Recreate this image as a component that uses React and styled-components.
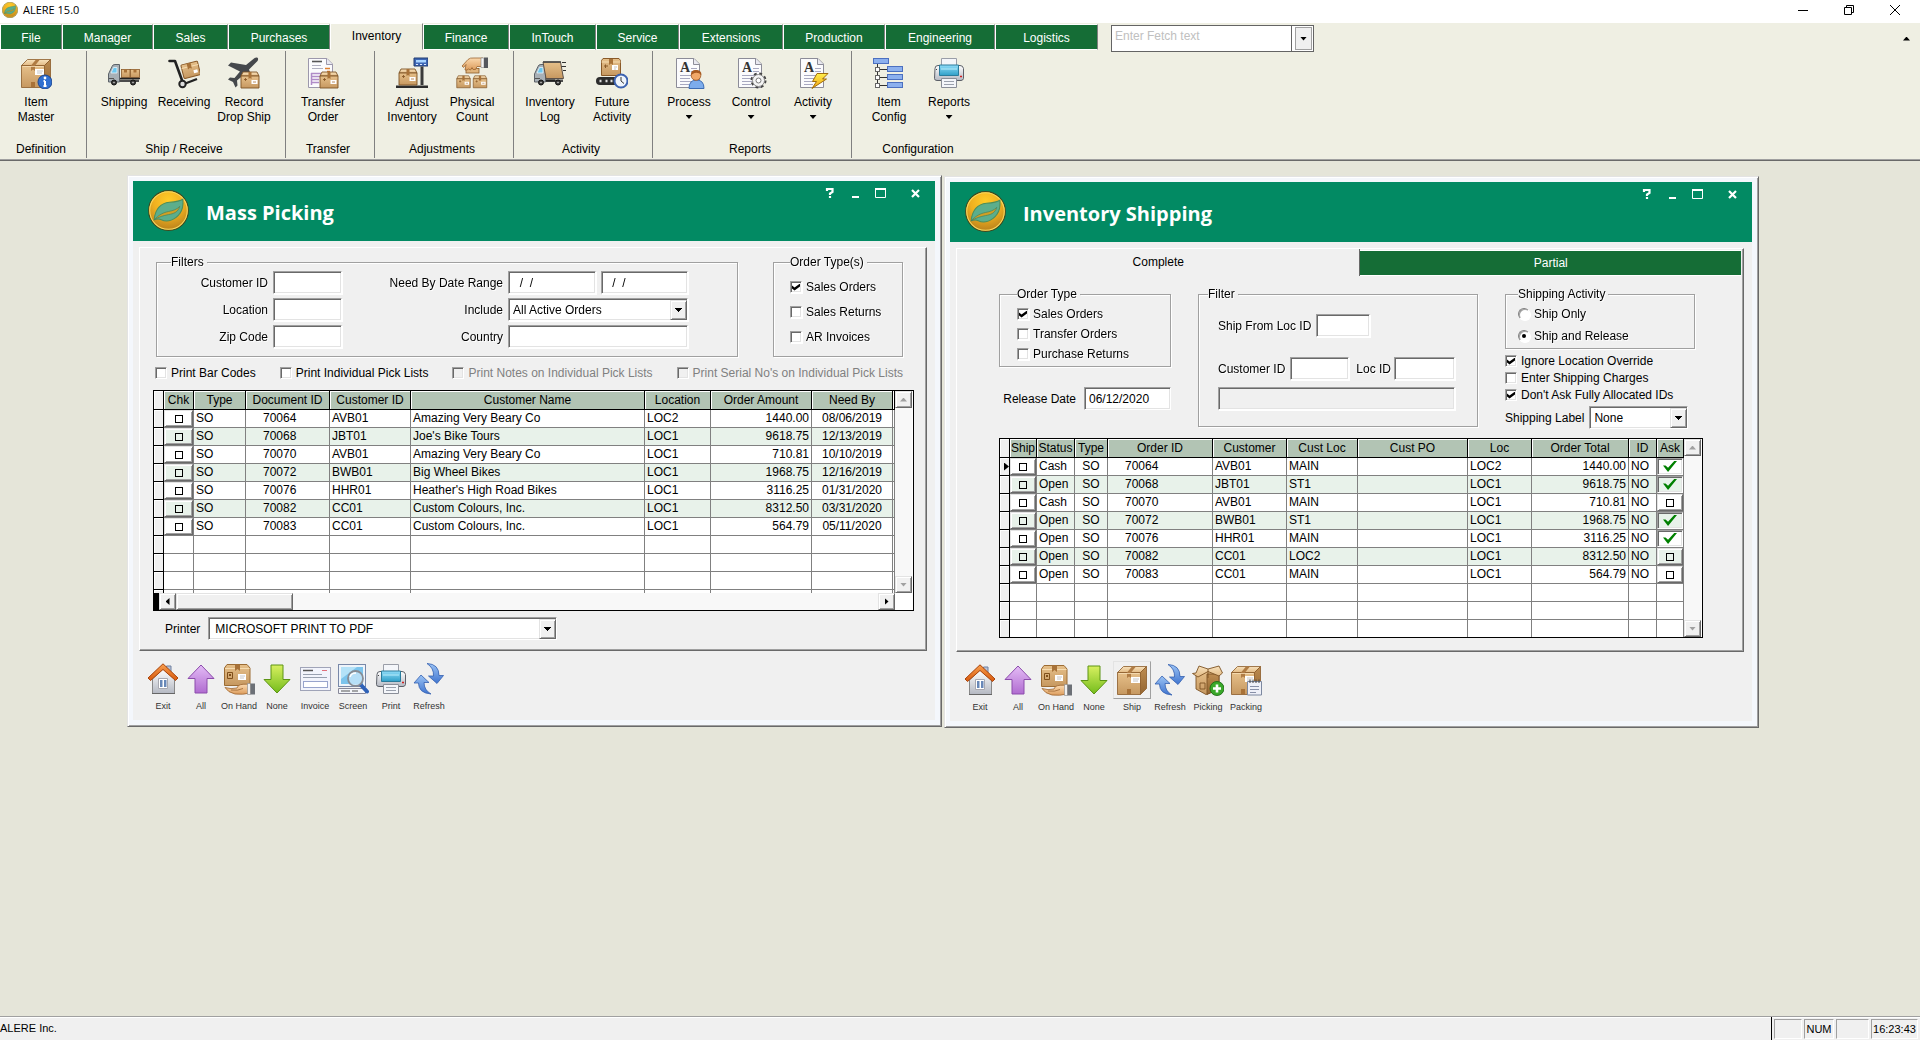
import React from "react";
import styled, {createGlobalStyle, css} from "styled-components";

const GlobalStyle = createGlobalStyle`
  *, *::before, *::after { box-sizing: border-box; }
  body {
    margin: 0;
    background: #e5e5d9;
    font-family: "Liberation Sans", Arial, sans-serif;
    font-size: 12px;
    color: #000;
  }
  button, input, select {
    font: inherit;
    color: inherit;
    margin: 0;
    padding: 0;
    border: 0;
    border-radius: 0;
    background: none;
    outline: none;
  }
`;

const sunken = css`
  border: 1px solid;
  border-color: #a0a0a0 #fff #fff #a0a0a0;
  box-shadow: inset 1px 1px #696969, inset -1px -1px #e3e3e3;
`;

const raised = css`
  border: 1px solid;
  border-color: #e3e3e3 #696969 #696969 #e3e3e3;
  box-shadow: inset 1px 1px #fff, inset -1px -1px #a0a0a0;
`;

/* ---------- icons ---------- */

const Svg = styled.svg`
  display: block;
  flex: none;
  width: ${({$size = 32}) => $size}px;
  height: ${({$size = 32}) => $size}px;
`;

const HiddenSvg = styled.svg`
  position: absolute;
  width: 0;
  height: 0;
`;

const Gradient = ({id, from, to}) => (
  <linearGradient id={id} x1="0" y1="0" x2="0" y2="1">
    <stop offset="0" stopColor={from} />
    <stop offset="1" stopColor={to} />
  </linearGradient>
);

const Gradients = () => (
  <HiddenSvg aria-hidden="true">
    <defs>
      <Gradient id="card" from="#e6c08a" to="#c69860" />
      <Gradient id="cardTop" from="#f8e2bc" to="#e2ba84" />
      <Gradient id="cardSide" from="#bd8c50" to="#946632" />
      <Gradient id="blue" from="#9cc4f5" to="#3f74cf" />
      <Gradient id="screen" from="#8fdcf8" to="#2f9fc8" />
      <Gradient id="steel" from="#ffffff" to="#b4b8c2" />
      <Gradient id="skin" from="#fbd9ae" to="#dc9c5c" />
      <Gradient id="purple" from="#e4bcf6" to="#b06cd0" />
      <Gradient id="lime" from="#d8f060" to="#74bc1c" />
      <Gradient id="bolt" from="#fff04c" to="#f0a010" />
      <Gradient id="roof" from="#f8a050" to="#d8590c" />
      <radialGradient id="coin" cx="0.5" cy="0.25" r="0.75">
        <stop offset="0" stopColor="#ffcc28" />
        <stop offset="0.5" stopColor="#f0b020" />
        <stop offset="1" stopColor="#b8801c" />
      </radialGradient>
    </defs>
  </HiddenSvg>
);

const Logo = ({size}) => (
  <Svg $size={size} viewBox="0 0 40 40">
    <circle cx="20" cy="20" r="19.4" fill="url(#coin)" stroke="#3c4a20" strokeWidth="1" />
    <circle cx="20" cy="20" r="18.3" fill="none" stroke="#f8d860" strokeWidth="1" />
    <path d="M6 29c1-10 6-16 15-17 6-.5 10-1 13-3 .5 5 0 10-3 14-4 6-12 9-18 6-2-1-4-1-7 0z" fill="#5cae8c" stroke="#4b8e5c" />
    <path d="M6 29c5-5 9-7 14-8 5-1 8-2 11-5-2 6-6 7-11 8-5 1-9 2-14 5z" fill="#d2a024" stroke="#3f7c58" strokeWidth="0.6" />
  </Svg>
);

// large box seen from the left front corner
const BigBox = () => (
  <g stroke="#8a5a28" strokeWidth="0.8" strokeLinejoin="round">
    <path d="M1.500 8.500 7.500 2.500H30.500L24.500 8.500z" fill="url(#cardTop)" />
    <path d="M24.500 8.500 30.500 2.500V24.500L24.500 30.500z" fill="url(#cardSide)" />
    <path d="M1.500 8.500H24.500V30.500H1.500z" fill="url(#card)" />
    <path d="M11 8.500 16 2.500H20L15 8.500V14L13 12.500 11 14z" fill="#b07c44" stroke="none" />
    <path d="M11 25H15V30H11z" fill="#a87238" stroke="none" />
    <path d="M2.500 9.500H23.500" stroke="#f8e0b8" />
  </g>
);

const Label = ({x, y, w = 8, h = 6}) => (
  <g>
    <rect x={x} y={y} width={w} height={h} fill="#fff" />
    <path d={`M${x + 2} ${y + 2}h${w - 3}M${x + 2} ${y + 4}h${w - 4}`} stroke="#b8b8b8" strokeWidth="0.8" />
  </g>
);

// front-facing box, drawn on a 20 x 17 area
const SmallBox = ({x, y, scale = 1}) => (
  <g transform={`translate(${x} ${y}) scale(${scale})`} stroke="#7d5224" strokeWidth="0.9" strokeLinejoin="round">
    <path d="M1 5 3 1H17L19 5z" fill="url(#cardTop)" />
    <rect x="1" y="5" width="18" height="12" fill="url(#card)" />
    <path d="M8.500 1H11.500V8L10 7 8.500 8z" fill="#a87238" stroke="none" />
    <path d="M4 8.500h3M5.500 7v3" fill="none" stroke="#8a5a28" />
    <rect x="11.500" y="9" width="6" height="4" fill="#fff" stroke="none" />
    <path d="M13 11h3" stroke="#b08050" />
  </g>
);

const Sheet = ({letter}) => (
  <g>
    <path d="M3.500 1.500H21L26.500 7V30.500H3.500z" fill="#fbfbfd" stroke="#8c8c98" />
    <path d="M20.500 1.500V7.500H26.500" fill="#e8e8f0" stroke="#8c8c98" />
    {letter && (
      <g>
        <text x="7" y="14.500" fontFamily="Liberation Serif, serif" fontWeight="bold" fontSize="14" fill="#333">A</text>
        <path d="M18 11.500h6M18 14.500h6M7 18.500h14M7 21.500h10M7 24.500h12M7 27.500h9" stroke="#a8a8c0" />
      </g>
    )}
  </g>
);

const Printer = () => (
  <g strokeLinejoin="round">
    <path d="M8.500 1.500H23.500V12H8.500z" fill="#f4f6fa" stroke="#9a9ea8" />
    <path d="M2 11.500Q2 8.500 5 8.500H27Q30 8.500 30.500 11.500V21.500Q30 23.500 28 23.500H4Q1.500 23.500 1.500 21.500z" fill="url(#steel)" stroke="#5c6068" />
    <path d="M6.500 8H25.500V18.500H6.500z" fill="url(#screen)" stroke="#2a7c9c" />
    <path d="M8 12H24" stroke="#b8ecfb" />
    <path d="M8.500 21.500H23.500V30.500H8.500z" fill="#f4f6fa" stroke="#8a8e98" />
    <path d="M11 24.500H21M11 27.500H21" stroke="#9aa0ac" />
    <path d="M27 19.500h2" stroke="#d02020" strokeWidth="1.500" />
    <path d="M3 12.500h1" stroke="#444" />
  </g>
);

const Wheels = ({a, b, y}) => (
  <g fill="#3c3c3c" stroke="#111">
    <circle cx={a} cy={y} r="2.500" />
    <circle cx={b} cy={y} r="2.500" />
    <circle cx={a} cy={y} r="0.800" fill="#ccc" stroke="none" />
    <circle cx={b} cy={y} r="0.800" fill="#ccc" stroke="none" />
  </g>
);

const Cab = () => (
  <g>
    <path d="M.5 25V17L4 9.500Q4.500 7.500 7 7.500H11.500V25z" fill="#a8b0b6" stroke="#5c6268" />
    <path d="M3 16 5.500 10.500H9V16z" fill="#6cc8f0" stroke="#e8f4fa" strokeWidth="0.800" />
    <path d="M1 21.500h5" stroke="#555" />
  </g>
);

const Hand = () => (
  <g>
    <path d="M2 24.500Q8 26.500 14 25L15.500 22.500Q19 20.500 27 21.500V30Q20 32 12 31 5 29.500 2 24.500z" fill="url(#skin)" stroke="#9c6430" strokeWidth="0.8" />
    <path d="M8 27Q15 28 20 25.500" fill="none" stroke="#9c6430" strokeWidth="0.8" />
    <path d="M24.500 20.500H27.500V31.500H24.500z" fill="#f0f0f0" stroke="#888" strokeWidth="0.600" />
    <path d="M27.500 20.500H32V31.500H27.500z" fill="#6c7076" />
  </g>
);

const icons = {
  item: (
    <g>
      <BigBox />
      <Label x={15} y={12} w={9} />
      <circle cx="25" cy="25" r="7" fill="#2f6fd0" stroke="#1c4690" />
      <path d="M25 24v5M23.500 24H25M23.500 29H26.500" stroke="#fff" strokeWidth="2" fill="none" />
      <circle cx="25" cy="21" r="1.400" fill="#fff" />
    </g>
  ),
  truck: (
    <g>
      <path d="M2 22.500H31V25H2z" fill="#4c4c4c" />
      <Cab />
      <g fill="url(#card)" stroke="#8a5a28" strokeWidth="0.800">
        <rect x="13.500" y="12.500" width="8.500" height="8" />
        <rect x="22.500" y="12.500" width="9" height="8" />
      </g>
      <path d="M16 12.500h3v3h-3zM25.500 12.500h3v3h-3z" fill="#a87238" />
      <path d="M12 21.500H32" stroke="#222" strokeWidth="1.500" />
      <Wheels a={6} b={25} y={25.500} />
    </g>
  ),
  dolly: (
    <g>
      <g transform="rotate(-14 22 12)">
        <rect x="14" y="6" width="17" height="14" rx="1" fill="url(#card)" stroke="#8a5a28" />
        <path d="M14 9.500H31" stroke="#f6dcb0" />
        <path d="M20 6h4v6l-2-1-2 1z" fill="#a87238" />
        <rect x="25" y="14" width="4" height="3" fill="#fff" />
      </g>
      <path d="M1.500 4H7L15 26" fill="none" stroke="#222" strokeWidth="2.600" strokeLinecap="round" strokeLinejoin="round" />
      <path d="M16 27 29 22" stroke="#222" strokeWidth="2.400" />
      <circle cx="14.500" cy="27" r="3.200" fill="#ddd" stroke="#222" strokeWidth="2" />
    </g>
  ),
  plane: (
    <g>
      <path d="M29 .5Q31 1 29.500 4L21 12.500 26 26 23 28 15.500 18 9 23.500 9.500 28.500 7.500 30.500 5 25 0 22.500 2 20.500 6.500 21 12 14.500 0 8.500 3 5.500 18 8 26 1.500Q28 0 29 .5z" fill="#45484c" />
      <SmallBox x={12} y={14} />
    </g>
  ),
  transfer: (
    <g>
      <path d="M1.500 1.500H20L25.500 7V30.500H1.500z" fill="#fbfbfd" stroke="#9c98ac" />
      <path d="M19.500 1.500V7.500H25.500" fill="#e8e8f0" stroke="#9c98ac" />
      <path d="M5 4.500h10" stroke="#555" strokeWidth="1.600" />
      <path d="M5 8.500h9M5 11.500h11" stroke="#b0b0c0" />
      <path d="M18 11.500h5M20 14.500h3" stroke="#e08030" strokeWidth="1.500" />
      <path d="M4 16.500H14M4 19.500H14M4 22.500H12M4 25.500H12M4.500 16V28" stroke="#b08cc8" strokeWidth="1.500" />
      <SmallBox x={12} y={14} />
    </g>
  ),
  scale: (
    <g>
      <path d="M18 1H32V9H18z" fill="#3c66b4" stroke="#223c70" />
      <path d="M20 3H30V5.500H20z" fill="#a8d4ff" />
      <path d="M20 7.500h2M24 7.500h2M28 7.500h2" stroke="#dde8ff" />
      <path d="M26 9.500V28" stroke="#3a3a3a" strokeWidth="3" />
      <path d="M0 28.500H32V31H0z" fill="#2c2c2c" />
      <SmallBox x={2} y={11} />
    </g>
  ),
  count: (
    <g>
      <rect x="10" y="11.500" width="13" height="4.500" fill="#e0b47c" stroke="#8a5a28" strokeWidth="0.800" />
      <path d="M6 9 12 2.500Q14 .5 18 1H27V9.500H21L19.500 12.500H17L16 10.500 14.500 13 12.500 12 11 13H9L10 7.500 7.500 10.500z" fill="url(#skin)" stroke="#9c6430" strokeWidth="0.800" />
      <path d="M25 1H28V10.500H25z" fill="#f4f4f4" stroke="#888" strokeWidth="0.600" />
      <path d="M28 .5H32V11H28z" fill="#55585e" />
      <SmallBox x={0} y={18} scale={0.75} />
      <SmallBox x={16.500} y={18} scale={0.75} />
    </g>
  ),
  fastTruck: (
    <g>
      <path d="M8 22.500H29V25H8z" fill="#4c4c4c" />
      <Cab />
      <path d="M9 5H26.500L29.500 21.500H12z" fill="url(#card)" stroke="#5c5048" />
      <path d="M9 5H27" stroke="#444" strokeWidth="1.500" />
      <path d="M28 5.500h4M27.500 9.500h4.500M29 13.500h3" stroke="#333" />
      <Wheels a={7} b={24} y={25.500} />
      <path d="M12 23.500h9" stroke="#222" strokeWidth="2" />
    </g>
  ),
  conveyor: (
    <g>
      <path d="M5.500 3.500 7 1.500H23L24.500 3.500V18.500H5.500z" fill="url(#card)" stroke="#8a5a28" />
      <path d="M5.500 5H24.500" stroke="#f6dcb0" />
      <path d="M13 2h4v6l-2-1.500-2 1.500z" fill="#a87238" />
      <path d="M9.500 7.500V11M8 9h4" stroke="#8a5a28" />
      <Label x={16} y={8} w={6} h={5} />
      <rect x="0" y="20" width="24" height="8" rx="4" fill="#2c2c2c" />
      <path d="M3.500 24h2M9.500 24h2M14.500 24h2" stroke="#ddd" strokeWidth="2.500" />
      <circle cx="25" cy="24" r="6.500" fill="#eef4fc" stroke="#3c62b0" strokeWidth="2" />
      <path d="M25 20V24L28 26.500" fill="none" stroke="#333" />
    </g>
  ),
  process: (
    <g>
      <Sheet letter />
      <path d="M16 31.500Q16 23 23.500 23T31 31.500z" fill="#7cacec" stroke="#3c6cb4" />
      <circle cx="23" cy="18.500" r="4.800" fill="#f2a868" stroke="#9c5420" strokeWidth="0.800" />
      <path d="M18 18Q17.500 13 23 13T28.500 18Q25.500 15 21.500 16z" fill="#a85a20" />
    </g>
  ),
  control: (
    <g>
      <Sheet letter />
      <circle cx="23.500" cy="23.500" r="6.500" fill="#f0f0f0" stroke="#444" strokeWidth="3" strokeDasharray="2.600 2.500" />
      <circle cx="23.500" cy="23.500" r="6" fill="#f4f4f4" stroke="#888" />
      <circle cx="23.500" cy="23.500" r="2.500" fill="#fff" stroke="#777" />
    </g>
  ),
  activity: (
    <g>
      <Sheet letter />
      <path d="M20 16.500H31L25.500 22H29.500L15 31.500 19.500 24.500H15.500z" fill="url(#bolt)" stroke="#a06c0c" strokeLinejoin="round" />
    </g>
  ),
  tree: (
    <g>
      <path d="M4.500 7V28M5 12.500H15M5 20.500H15M5 28.500H15" stroke="#333" fill="none" />
      <g fill="#8cb0ee" stroke="#4c70c0">
        <rect x=".5" y="1.500" width="15" height="5" />
        <rect x="14.500" y="9.500" width="15" height="5" />
        <rect x="14.500" y="17.500" width="15" height="5" />
        <rect x="14.500" y="25.500" width="15" height="5" />
      </g>
      <g fill="#fff" stroke="#666">
        <rect x="2.500" y="10.500" width="4" height="4" />
        <rect x="2.500" y="18.500" width="4" height="4" />
        <rect x="2.500" y="26.500" width="4" height="4" />
      </g>
    </g>
  ),
  printer: <Printer />,
  exit: (
    <g>
      <path d="M19.500 3H24V11H19.500z" fill="#b8c4d8" stroke="#7080a0" />
      <path d="M5.500 30.500V16L16 6 27.500 16V30.500z" fill="url(#steel)" stroke="#888" />
      <path d="M5 30.500H28" stroke="#666" />
      <path d="M11.500 15.500H20.500V25.500H11.500z" fill="#fff" stroke="#a8a8b0" />
      <path d="M13 17H15.500V24H13zM17 17H19.500V24H17z" fill="#6888b8" />
      <path d="M16 .8 31 15 28.500 17.500 16 6.500 3.500 17.500 1 15z" fill="url(#roof)" stroke="#a8440c" strokeLinejoin="round" />
    </g>
  ),
  up: <path d="M16 2 29 15.500H22V30H10V15.500H3z" fill="url(#purple)" stroke="#8c4cac" strokeLinejoin="round" />,
  down: <path d="M16 30 29 16.500H22V2H10V16.500H3z" fill="url(#lime)" stroke="#5c9414" strokeLinejoin="round" />,
  onHand: (
    <g>
      <path d="M1.500 5 4 1.500H24L27 5V22.500H1.500z" fill="url(#card)" stroke="#9c6c34" />
      <path d="M2 5.500H26.500" stroke="#f6dcb0" />
      <path d="M12 1.500h5V8l-2.500-2L12 8z" fill="#a87238" />
      <path d="M4.500 9.500H9.500V15.500H4.500z" fill="none" stroke="#80501c" />
      <path d="M6 11h2v2H6z" fill="#80501c" />
      <Label x={15} y={11} />
      <Hand />
    </g>
  ),
  invoice: (
    <g>
      <rect x="1.500" y="4.500" width="30" height="23" fill="#f2f4fc" stroke="#a0a4b8" />
      <path d="M4 7.500h10" stroke="#555" strokeWidth="1.500" />
      <path d="M23 7.500h5" stroke="#e0707c" />
      <path d="M4 11.500h19M4 14.500h24" stroke="#98a0b0" />
      <rect x="4.500" y="18.500" width="24" height="6" fill="#fff" stroke="#98a4cc" />
    </g>
  ),
  screen: (
    <g>
      <rect x="1.500" y="1.500" width="27" height="22" fill="#eef4fa" stroke="#7888a8" />
      <rect x="4" y="4" width="22" height="17" fill="#7cc4ec" />
      <path d="M4 4H20L4 16z" fill="#b4e2f8" />
      <path d="M1.500 25.500H28.500V30.500H1.500z" fill="#f4f6fa" stroke="#889" />
      <path d="M4 28h9M15 28h6" stroke="#555" />
      <path d="M24 22 30 28.500" stroke="#2f62b8" strokeWidth="4" strokeLinecap="round" />
      <circle cx="18.500" cy="15.500" r="7.500" fill="#c4e6fa" fillOpacity="0.800" stroke="#888c94" strokeWidth="1.800" />
      <path d="M13 14Q14 10 19 10" fill="none" stroke="#fff" strokeWidth="1.500" />
    </g>
  ),
  refresh: (
    <g fill="url(#blue)" stroke="#3460b0" strokeWidth="0.8" strokeLinejoin="round">
      <path d="M14 .5Q26 1 26 12.500H30.500L24 20.500 15.500 13H20.500Q21 5 14 .5z" />
      <path d="M18 31Q5.500 30 5.500 20H1L8 12 16 19.500H11Q11 27 18 31z" />
    </g>
  ),
  ship: (
    <g>
      <BigBox />
      <Label x={15} y={13} w={9} />
    </g>
  ),
  picking: (
    <g stroke="#7d5224" strokeWidth="0.900" strokeLinejoin="round">
      <path d="M4 10V25L14 30.500 27 25V10L16 6z" fill="url(#card)" />
      <path d="M15 10V30.500L27 25V10z" fill="url(#cardSide)" />
      <path d="M4 9 7 2 16 5 27 2 30.500 9 27 12 16 7.500 6 13 .5 9.500z" fill="url(#cardTop)" />
      <path d="M16 5V14" />
      <path d="M8 19h5v6H8z" fill="none" />
      <circle cx="25" cy="24.500" r="7" fill="#3aa82a" stroke="#1c6c14" />
      <path d="M25 20.500V28.500M21 24.500H29" stroke="#fff" strokeWidth="2.600" />
    </g>
  ),
  packing: (
    <g>
      <BigBox />
      <Label x={15} y={12} w={9} />
      <path d="M17.500 17.500H31.500V31H17.500z" fill="#eef0f8" stroke="#7c88a0" />
      <path d="M20 15.500V19M23 15.500V19M26 15.500V19M29 15.500V19" stroke="#444" />
      <path d="M20 22.500H29M20 25.500H29M20 28.500H26" stroke="#8890a8" />
    </g>
  ),
};

const Icon = ({name}) => (
  <Svg viewBox="0 0 32 32" aria-hidden="true">
    {icons[name]}
  </Svg>
);

/* ---------- application frame ---------- */

const Shell = styled.div`
  min-height: 100vh;
  display: flex;
  flex-direction: column;
`;

const TitleBar = styled.header`
  display: flex;
  align-items: center;
  height: 23px;
  padding: 0 20px 4px 2px;
  background: #fff;
`;

const AppTitle = styled.span`
  flex: 1;
  margin-left: 5px;
  font-family: "Open Sans", sans-serif;
  font-size: 11px;
  line-height: 18px;
`;

const TitleButton = styled.button`
  display: flex;
  width: 10px;
  margin-left: 36px;
`;

const TabBar = styled.nav`
  position: relative;
  z-index: 1;
  display: flex;
  align-items: flex-end;
  height: 27px;
  background: #efefe3;
`;

const Tab = styled.button`
  width: ${({$width}) => $width}px;
  height: ${({$active}) => ($active ? 27 : 26)}px;
  padding: ${({$active}) => ($active ? "0 0 2px" : "1px 0 0")};
  color: ${({$active}) => ($active ? "#000" : "#fff")};
  background: ${({$active}) => ($active ? "#efefe3" : "#156d36")};
  border: 1px solid;
  border-color: #fff #808080 ${({$active}) => ($active ? "#efefe3" : "#fff")} #fff;
`;

const Fetch = styled.div`
  align-self: flex-start;
  display: flex;
  width: 203px;
  height: 27px;
  margin: 2px 0 0 13px;
  background: #fff;
  border: 1px solid #646464;
`;

const FetchInput = styled.input`
  flex: 1;
  min-width: 0;
  padding: 0 3px 5px;
  border-right: 1px solid #646464;
  &::placeholder {
    color: #c0c0c0;
    opacity: 1;
  }
`;

const FetchButton = styled.button`
  display: flex;
  align-items: center;
  justify-content: center;
  width: 17px;
  margin: 1px 1px 1px 3px;
  background: #f0f0f0;
  border: 1px solid #a0a0a0;
`;

const Arrow = styled.span`
  display: block;
  width: ${({$dir}) => ($dir === "left" || $dir === "right" ? 4 : 7)}px;
  height: ${({$dir}) => ($dir === "left" || $dir === "right" ? 7 : 4)}px;
  background: ${({$color = "#000"}) => $color};
  clip-path: ${({$dir = "down"}) =>
    ({
      down: "polygon(0 0, 100% 0, 50% 100%)",
      up: "polygon(0 100%, 100% 100%, 50% 0)",
      left: "polygon(100% 0, 100% 100%, 0 50%)",
      right: "polygon(0 0, 0 100%, 100% 50%)",
    })[$dir]};
`;

const CollapseButton = styled.button`
  align-self: center;
  margin: 4px 10px 0 auto;
`;

const Ribbon = styled.div`
  display: flex;
  height: 111px;
  padding: 1px 0 2px;
  background: #efefe3;
  border-bottom: 1px solid #696969;
  box-shadow: inset 0 -1px #a0a0a0;
`;

const RibbonGroup = styled.section`
  display: flex;
  flex-direction: column;
  justify-content: space-between;
  width: ${({$width}) => $width}px;
  padding: 6px 0 1px;
  border-right: ${({$last}) => ($last ? "none" : "1px solid #808080")};
`;

const RibbonItems = styled.div`
  display: flex;
  gap: ${({$gap = 0}) => $gap}px;
  padding-left: ${({$pad = 7}) => $pad}px;
`;

const RibbonButton = styled.button`
  display: flex;
  flex-direction: column;
  align-items: center;
  width: 60px;
  line-height: 15px;
  white-space: pre;
`;

const RibbonText = styled.span`
  margin-top: 6px;
`;

const RibbonCaption = styled.div`
  padding-right: 4px;
  line-height: 15px;
  text-align: center;
`;

const DownArrow = styled(Arrow)`
  margin-top: 5px;
`;

const Desktop = styled.main`
  position: relative;
  flex: 1;
  min-height: 580px;
  overflow: hidden;
`;

const StatusBar = styled.footer`
  display: flex;
  align-items: stretch;
  height: 24px;
  background: #f0f0f0;
  border-top: 1px solid #a0a0a0;
  box-shadow: inset 0 1px #fff;
  font-size: 11px;
  line-height: 22px;
`;

const StatusText = styled.span`
  flex: 1;
  border-right: 1px solid #000;
  margin-right: 2px;
`;

const StatusCell = styled.span`
  width: ${({$width}) => $width}px;
  margin: 2px 2px 1px 0;
  line-height: 18px;
  text-align: center;
  border: 1px solid;
  border-color: #a0a0a0 #fff #fff #a0a0a0;
`;

/* ---------- MDI windows ---------- */

const WindowFrame = styled.section`
  position: absolute;
  left: ${({$left}) => $left}px;
  top: ${({$top}) => $top}px;
  width: 815px;
  padding: 5px 6px 6px 5px;
  background: #f4f7fc;
  ${raised}
`;

const WindowHeader = styled.header`
  display: flex;
  align-items: center;
  height: 60px;
  padding: 0 15px 2px;
  background: #028a63;
`;

const WindowTitle = styled.h1`
  flex: 1;
  margin: 0;
  padding: 6px 0 0 17px;
  color: #fff;
  font: bold 20px/28px "Open Sans", "Noto Sans", sans-serif;
`;

const WindowButtons = styled.div`
  align-self: flex-start;
  display: flex;
  align-items: center;
  gap: 14px;
  padding-top: 6px;
`;

const WindowButton = styled.button`
  display: flex;
  margin-left: ${({$far}) => ($far ? 11 : 0)}px;
`;

const WindowBody = styled.div`
  padding: 6px 8px 6px 6px;
  background: #f0f0f0;
`;

const Page = styled.div`
  padding-bottom: ${({$bottom}) => $bottom}px;
  border: 1px solid;
  border-color: #fff #696969 #696969 #fff;
  box-shadow: inset -1px -1px #a0a0a0;
`;

const Toolbar = styled.div`
  display: flex;
  padding: 9px 0 0 5px;
`;

const ToolButton = styled.button`
  width: 38px;
  font-size: 9px;
  line-height: 16px;
  color: #333;
  white-space: nowrap;
`;

const ToolIcon = styled.span`
  display: flex;
  align-items: center;
  justify-content: center;
  height: 38px;
  border: 1px solid;
  border-color: ${({$framed}) => ($framed ? "#e3e3e3 #a0a0a0 #a0a0a0 #e3e3e3" : "transparent")};
`;

/* ---------- form parts ---------- */

const Group = styled.fieldset`
  min-width: 0;
  margin: 0;
  padding: ${({$pad}) => $pad};
  border: 1px solid #a0a0a0;
  filter: drop-shadow(1px 1px 0 #fff);
`;

const Legend = styled.legend`
  padding: 0 3px 0 0;
  line-height: 14px;
`;

const Stack = styled.div`
  display: flex;
  flex-direction: column;
  gap: ${({$gap}) => $gap}px;
`;

const CheckLabel = styled.label`
  display: flex;
  align-items: center;
  gap: 4px;
  line-height: 14px;
  white-space: nowrap;
  color: ${({$disabled}) => ($disabled ? "#808080" : "#000")};
`;

const CheckInput = styled.input`
  appearance: none;
  display: flex;
  align-items: center;
  justify-content: center;
  width: 12px;
  height: 12px;
  background: ${({disabled}) => (disabled ? "#f0f0f0" : "#fff")};
  ${sunken}
  &:checked::before {
    content: "";
    width: 8px;
    height: 7px;
    background: #000;
    clip-path: polygon(0 30%, 32% 58%, 100% 0, 100% 42%, 32% 100%, 0 72%);
  }
`;

const RadioInput = styled(CheckInput)`
  border-radius: 50%;
  border-color: #808080 #fff #fff #808080;
  box-shadow: inset 1px 1px #a0a0a0;
  &:checked::before {
    width: 4px;
    height: 4px;
    border-radius: 50%;
    clip-path: none;
  }
`;

const TextInput = styled.input`
  width: ${({$width}) => ($width ? `${$width}px` : "100%")};
  min-width: 0;
  height: 23px;
  padding: 0 4px;
  background: ${({readOnly}) => (readOnly ? "#f0f0f0" : "#fff")};
  white-space: pre;
  ${sunken}
`;

const SelectBox = styled.span`
  position: relative;
  display: flex;
  width: ${({$width}) => $width}px;
  height: 23px;
  background: #fff;
  ${sunken}
  &::after {
    content: "";
    position: absolute;
    top: 1px;
    right: 0;
    width: 17px;
    height: 20px;
    background: linear-gradient(#000, #000) 4px 7px / 7px 1px no-repeat,
      linear-gradient(#000, #000) 5px 8px / 5px 1px no-repeat,
      linear-gradient(#000, #000) 6px 9px / 3px 1px no-repeat,
      linear-gradient(#000, #000) 7px 10px / 1px 1px no-repeat,
      #f0f0f0;
    pointer-events: none;
    ${raised}
  }
`;

const Select = styled.select`
  appearance: none;
  width: 100%;
  padding: 0 20px 0 ${({$pad = 4}) => $pad}px;
`;

const FilterGrid = styled.div`
  display: grid;
  grid-template-columns: 97px 69px 156px 180px;
  gap: 4px 5px;
  align-items: center;
`;

const FieldLabel = styled.label`
  text-align: right;
  white-space: nowrap;
`;

const Row = styled.div`
  display: flex;
  align-items: center;
  gap: ${({$gap = 5}) => $gap}px;
  justify-content: ${({$justify = "flex-start"}) => $justify};
  margin: ${({$margin = 0}) => $margin};
`;

const FilterRow = styled.div`
  display: flex;
  gap: 35px;
  padding: 7px 23px 0 16px;
`;

const OptionRow = styled.div`
  display: flex;
  justify-content: space-between;
  margin: 9px 23px 10px 15px;
`;

const FilterGroup = styled(Group)`
  flex: 1;
`;

const SideGroup = styled(Group)`
  width: 130px;
`;

const TabStrip = styled.div`
  display: flex;
  height: 27px;
  padding-right: 2px;
`;

const PageTab = styled.button`
  flex: ${({$flex}) => $flex};
  ${({$active}) =>
    $active
      ? css`
          padding-bottom: 2px;
          border-right: 1px solid #696969;
        `
      : css`
          margin: 1px 0 0;
          color: #fff;
          background: #156d36;
          border: solid #fff;
          border-width: 1px 0;
        `}
`;

const ShippingForm = styled.div`
  display: grid;
  grid-template-columns: 172px 280px 190px;
  gap: 0 27px;
  align-items: start;
  padding: 11px 0 9px 42px;
`;

const FilterFields = styled.div`
  padding: 0 13px 0 10px;
`;

/* ---------- data grid ---------- */

const GridFrame = styled.div`
  margin: ${({$margin}) => $margin};
  border: 1px solid #000;
  background: #fff;
`;

const GridMain = styled.div`
  display: flex;
  height: ${({$height}) => $height}px;
  padding-right: 1px;
`;

const TableClip = styled.div`
  flex: 1;
  min-width: 0;
  overflow: hidden;
`;

const Table = styled.table`
  width: 100%;
  table-layout: fixed;
  border-collapse: separate;
  border-spacing: 0;
`;

const HeadCell = styled.th`
  width: ${({$width}) => ($width ? `${$width}px` : "auto")};
  height: 19px;
  padding: 0;
  overflow: hidden;
  font-weight: normal;
  line-height: 18px;
  white-space: nowrap;
  background: ${({$blank}) => ($blank ? "#f0f0f0" : "#b2c4b4")};
  border: solid #000;
  border-width: 0 1px 1px 0;
  box-shadow: inset 1px 1px #fff;
`;

const BodyRow = styled.tr`
  background: ${({$alt}) => ($alt ? "#e8f2ea" : "#fff")};
`;

const Cell = styled.td`
  height: 18px;
  padding: 0 2px 0 ${({$indent = 2}) => $indent}px;
  overflow: hidden;
  line-height: 17px;
  text-align: ${({$align = "left"}) => $align};
  white-space: nowrap;
  border: solid #808080;
  border-width: 0 1px 1px 0;
`;

const MarkerCell = styled(Cell)`
  padding: 0;
  background: #f0f0f0;
  border-color: #000;
  box-shadow: inset 1px 1px #fff;
`;

const CheckCell = styled(Cell)`
  padding: 0;
  line-height: 0;
`;

const Marker = styled(Arrow)`
  width: 5px;
  height: 8px;
  margin-left: 4px;
`;

const GridCheck = styled.input`
  appearance: none;
  display: flex;
  align-items: center;
  justify-content: center;
  width: 100%;
  height: 17px;
  ${raised}
  &::before {
    content: "";
    width: 8px;
    height: 8px;
    border: 1px solid #000;
  }
  &:checked {
    ${sunken}
  }
  &:checked::before {
    width: 14px;
    height: 11px;
    border: 0;
    background: #008000;
    clip-path: polygon(0 40%, 18% 40%, 36% 62%, 80% 0, 100% 0, 36% 100%);
  }
`;

const VScroll = styled.div`
  display: flex;
  flex-direction: column;
  justify-content: space-between;
  width: 17px;
  background: #f8f8f8;
`;

const HScroll = styled.div`
  display: flex;
  height: 17px;
  padding-right: 18px;
  border-left: 5px solid #000;
`;

const ScrollButton = styled.button`
  display: flex;
  align-items: center;
  justify-content: center;
  width: 17px;
  height: 17px;
  background: #f0f0f0;
  ${raised}
`;

const Track = styled.div`
  flex: 1;
  background: #f8f8f8;
`;

const Thumb = styled.div`
  width: 117px;
  height: 17px;
  background: #f0f0f0;
  ${raised}
`;

const DataGrid = ({columns, rows, margin, height, rowCount, horizontal, current}) => {
  const lines = Array.from({length: rowCount}, (_, i) => rows[i]);
  return (
    <GridFrame $margin={margin}>
      <GridMain $height={height}>
        <TableClip>
          <Table>
            <thead>
              <tr>
                <HeadCell $width={10} $blank />
                {columns.map(({label, width}, i) => (
                  <HeadCell key={i} $width={width}>{label}</HeadCell>
                ))}
              </tr>
            </thead>
            <tbody>
              {lines.map((row, r) => (
                <BodyRow key={r} $alt={row && r % 2 === 1}>
                  <MarkerCell>{current === r && <Marker $dir="right" />}</MarkerCell>
                  {columns.map(({label, check, align, indent}, c) =>
                    check && row ? (
                      <CheckCell key={c}>
                        <GridCheck type="checkbox" aria-label={label} defaultChecked={row[c]} />
                      </CheckCell>
                    ) : (
                      <Cell key={c} $align={align} $indent={indent}>{row && row[c]}</Cell>
                    )
                  )}
                </BodyRow>
              ))}
            </tbody>
          </Table>
        </TableClip>
        <VScroll>
          <ScrollButton aria-label="Scroll up"><Arrow $dir="up" $color="#a0a0a0" /></ScrollButton>
          <ScrollButton aria-label="Scroll down"><Arrow $color="#a0a0a0" /></ScrollButton>
        </VScroll>
      </GridMain>
      {horizontal && (
        <HScroll>
          <ScrollButton aria-label="Scroll left"><Arrow $dir="left" /></ScrollButton>
          <Track><Thumb /></Track>
          <ScrollButton aria-label="Scroll right"><Arrow $dir="right" /></ScrollButton>
        </HScroll>
      )}
    </GridFrame>
  );
};

/* ---------- shared pieces ---------- */

const Check = ({label, ...rest}) => (
  <CheckLabel $disabled={rest.disabled}>
    <CheckInput type="checkbox" {...rest} />
    {label}
  </CheckLabel>
);

const Radio = ({label, ...rest}) => (
  <CheckLabel>
    <RadioInput type="radio" {...rest} />
    {label}
  </CheckLabel>
);

const Dropdown = ({id, width, value, pad}) => (
  <SelectBox $width={width}>
    <Select id={id} $pad={pad}>
      <option>{value}</option>
    </Select>
  </SelectBox>
);

const MdiWindow = ({title, left, top, children}) => (
  <WindowFrame $left={left} $top={top}>
    <WindowHeader>
      <Logo size={41} />
      <WindowTitle>{title}</WindowTitle>
      <WindowButtons>
        <WindowButton aria-label="Help">
          <Svg $size={12} viewBox="0 0 12 12" fill="none" stroke="#fff" strokeWidth="2.200">
            <path d="M2 4V2H7.500V5L5 6.500V8M3.900 10H6.100" />
          </Svg>
        </WindowButton>
        <WindowButton aria-label="Minimize">
          <Svg $size={10} viewBox="0 0 10 10" stroke="#fff" strokeWidth="2"><path d="M1 9H8" /></Svg>
        </WindowButton>
        <WindowButton aria-label="Maximize">
          <Svg $size={11} viewBox="0 0 11 11" fill="none" stroke="#fff"><path d="M.5 1V9.500H10.500V1M0 1.500H11" /><path d="M0 1H11" strokeWidth="2" /></Svg>
        </WindowButton>
        <WindowButton aria-label="Close" $far>
          <Svg $size={9} viewBox="0 0 9 9" stroke="#fff" strokeWidth="2.200"><path d="M1 1 8 8M8 1 1 8" /></Svg>
        </WindowButton>
      </WindowButtons>
    </WindowHeader>
    <WindowBody>{children}</WindowBody>
  </WindowFrame>
);

const Tools = ({items}) => (
  <Toolbar>
    {items.map(({icon, label, framed}) => (
      <ToolButton key={label}>
        <ToolIcon $framed={framed}><Icon name={icon} /></ToolIcon>
        {label}
      </ToolButton>
    ))}
  </Toolbar>
);

/* ---------- data ---------- */

const tabs = [
  ["File", 62], ["Manager", 91], ["Sales", 75], ["Purchases", 102], ["Inventory", 93], ["Finance", 86],
  ["InTouch", 87], ["Service", 83], ["Extensions", 104], ["Production", 102], ["Engineering", 110], ["Logistics", 103],
];

const ribbon = [
  {title: "Definition", width: 87, pad: 6, items: [["item", "Item\nMaster"]]},
  {title: "Ship / Receive", width: 199, items: [["truck", "Shipping"], ["dolly", "Receiving"], ["plane", "Record\nDrop Ship"]]},
  {title: "Transfer", width: 89, items: [["transfer", "Transfer\nOrder"]]},
  {title: "Adjustments", width: 139, items: [["scale", "Adjust\nInventory"], ["count", "Physical\nCount"]]},
  {title: "Activity", width: 139, pad: 6, gap: 2, items: [["fastTruck", "Inventory\nLog"], ["conveyor", "Future\nActivity"]]},
  {title: "Reports", width: 199, pad: 6, gap: 2, items: [["process", "Process", true], ["control", "Control", true], ["activity", "Activity", true]]},
  {title: "Configuration", width: 136, items: [["tree", "Item\nConfig"], ["printer", "Reports", true]]},
];

const pickColumns = [
  {label: "Chk", width: 30, check: true},
  {label: "Type", width: 52},
  {label: "Document ID", width: 84, indent: 17},
  {label: "Customer ID", width: 81},
  {label: "Customer Name"},
  {label: "Location", width: 66},
  {label: "Order Amount", width: 101, align: "right"},
  {label: "Need By", width: 81, align: "center"},
  {label: "", width: 2, indent: 0},
];

const pickRows = [
  [false, "SO", "70064", "AVB01", "Amazing Very Beary Co", "LOC2", "1440.00", "08/06/2019"],
  [false, "SO", "70068", "JBT01", "Joe's Bike Tours", "LOC1", "9618.75", "12/13/2019"],
  [false, "SO", "70070", "AVB01", "Amazing Very Beary Co", "LOC1", "710.81", "10/10/2019"],
  [false, "SO", "70072", "BWB01", "Big Wheel Bikes", "LOC1", "1968.75", "12/16/2019"],
  [false, "SO", "70076", "HHR01", "Heather's High Road Bikes", "LOC1", "3116.25", "01/31/2020"],
  [false, "SO", "70082", "CC01", "Custom Colours, Inc.", "LOC1", "8312.50", "03/31/2020"],
  [false, "SO", "70083", "CC01", "Custom Colours, Inc.", "LOC1", "564.79", "05/11/2020"],
];

const shipColumns = [
  {label: "Ship", width: 27, check: true},
  {label: "Status", width: 38},
  {label: "Type", width: 33, align: "center"},
  {label: "Order ID", width: 105, indent: 17},
  {label: "Customer", width: 74},
  {label: "Cust Loc", width: 71},
  {label: "Cust PO"},
  {label: "Loc", width: 64},
  {label: "Order Total", width: 97, align: "right"},
  {label: "ID", width: 28},
  {label: "Ask", width: 27, check: true},
];

const shipRows = [
  [false, "Cash", "SO", "70064", "AVB01", "MAIN", "", "LOC2", "1440.00", "NO", true],
  [false, "Open", "SO", "70068", "JBT01", "ST1", "", "LOC1", "9618.75", "NO", true],
  [false, "Cash", "SO", "70070", "AVB01", "MAIN", "", "LOC1", "710.81", "NO", false],
  [false, "Open", "SO", "70072", "BWB01", "ST1", "", "LOC1", "1968.75", "NO", true],
  [false, "Open", "SO", "70076", "HHR01", "MAIN", "", "LOC1", "3116.25", "NO", true],
  [false, "Open", "SO", "70082", "CC01", "LOC2", "", "LOC1", "8312.50", "NO", false],
  [false, "Open", "SO", "70083", "CC01", "MAIN", "", "LOC1", "564.79", "NO", false],
];

const pickTools = [
  {icon: "exit", label: "Exit"},
  {icon: "up", label: "All"},
  {icon: "onHand", label: "On Hand"},
  {icon: "down", label: "None"},
  {icon: "invoice", label: "Invoice"},
  {icon: "screen", label: "Screen"},
  {icon: "printer", label: "Print"},
  {icon: "refresh", label: "Refresh"},
];

const shipTools = [
  {icon: "exit", label: "Exit"},
  {icon: "up", label: "All"},
  {icon: "onHand", label: "On Hand"},
  {icon: "down", label: "None"},
  {icon: "ship", label: "Ship", framed: true},
  {icon: "refresh", label: "Refresh"},
  {icon: "picking", label: "Picking"},
  {icon: "packing", label: "Packing"},
];

/* ---------- screens ---------- */

const MassPicking = () => (
  <MdiWindow title="Mass Picking" left={127} top={14}>
    <Page $bottom={10}>
      <FilterRow>
        <FilterGroup $pad="2px 0 8px 14px">
          <Legend>Filters</Legend>
          <FilterGrid>
            <FieldLabel htmlFor="customer">Customer ID</FieldLabel>
            <TextInput id="customer" />
            <FieldLabel htmlFor="from">Need By Date Range</FieldLabel>
            <Row>
              <TextInput id="from" defaultValue="  /  /" />
              <TextInput aria-label="Need By Date To" defaultValue="  /  /" />
            </Row>
            <FieldLabel htmlFor="location">Location</FieldLabel>
            <TextInput id="location" />
            <FieldLabel htmlFor="include">Include</FieldLabel>
            <Dropdown id="include" width={180} value="All Active Orders" />
            <FieldLabel htmlFor="zip">Zip Code</FieldLabel>
            <TextInput id="zip" />
            <FieldLabel htmlFor="country">Country</FieldLabel>
            <TextInput id="country" />
          </FilterGrid>
        </FilterGroup>
        <SideGroup $pad="11px 0 0 16px">
          <Legend>Order Type(s)</Legend>
          <Stack $gap={11}>
            <Check label="Sales Orders" defaultChecked />
            <Check label="Sales Returns" />
            <Check label="AR Invoices" />
          </Stack>
        </SideGroup>
      </FilterRow>
      <OptionRow>
        <Check label="Print Bar Codes" />
        <Check label="Print Individual Pick Lists" />
        <Check label="Print Notes on Individual Pick Lists" disabled />
        <Check label="Print Serial No's on Individual Pick Lists" disabled />
      </OptionRow>
      <DataGrid columns={pickColumns} rows={pickRows} rowCount={11} height={202} margin="0 12px 0 13px" horizontal />
      <Row $gap={8} $margin="6px 0 0 25px">
        <FieldLabel htmlFor="printer">Printer</FieldLabel>
        <Dropdown id="printer" width={349} value="MICROSOFT PRINT TO PDF" pad={6} />
      </Row>
    </Page>
    <Tools items={pickTools} />
  </MdiWindow>
);

const InventoryShipping = () => (
  <MdiWindow title="Inventory Shipping" left={944} top={15}>
    <Page $bottom={13}>
      <TabStrip>
        <PageTab $flex={403} $active>Complete</PageTab>
        <PageTab $flex={381}>Partial</PageTab>
      </TabStrip>
      <ShippingForm>
        <div>
          <Group $pad="6px 0 5px 17px">
            <Legend>Order Type</Legend>
            <Stack $gap={6}>
              <Check label="Sales Orders" defaultChecked />
              <Check label="Transfer Orders" />
              <Check label="Purchase Returns" />
            </Stack>
          </Group>
          <Row $gap={8} $justify="flex-end" $margin="20px 0 0">
            <FieldLabel htmlFor="release">Release Date</FieldLabel>
            <TextInput id="release" $width={87} defaultValue="06/12/2020" />
          </Row>
        </div>
        <Group $pad="13px 9px 16px 9px">
          <Legend>Filter</Legend>
          <FilterFields>
            <Row>
              <FieldLabel htmlFor="shipFrom">Ship From Loc ID</FieldLabel>
              <TextInput id="shipFrom" $width={54} />
            </Row>
            <Row $justify="space-between" $margin="20px 0 7px">
              <Row>
                <FieldLabel htmlFor="shipCustomer">Customer ID</FieldLabel>
                <TextInput id="shipCustomer" $width={59} />
              </Row>
              <Row $gap={3}>
                <FieldLabel htmlFor="locId">Loc ID</FieldLabel>
                <TextInput id="locId" $width={61} />
              </Row>
            </Row>
            <Row>
              <TextInput aria-label="Customer name" readOnly />
            </Row>
          </FilterFields>
        </Group>
        <div>
          <Group $pad="6px 0 5px 12px">
            <Legend>Shipping Activity</Legend>
            <Stack $gap={8}>
              <Radio name="activity" label="Ship Only" />
              <Radio name="activity" label="Ship and Release" defaultChecked />
            </Stack>
          </Group>
          <Row $margin="5px 0 4px">
            <Stack $gap={3}>
              <Check label="Ignore Location Override" defaultChecked />
              <Check label="Enter Shipping Charges" />
              <Check label="Don't Ask Fully Allocated IDs" defaultChecked />
            </Stack>
          </Row>
          <Row>
            <FieldLabel htmlFor="shipLabel">Shipping Label</FieldLabel>
            <Dropdown id="shipLabel" width={99} value="None" />
          </Row>
        </div>
      </ShippingForm>
      <DataGrid columns={shipColumns} rows={shipRows} rowCount={10} height={198} margin="0 40px 0 42px" current={0} />
    </Page>
    <Tools items={shipTools} />
  </MdiWindow>
);

const App = () => (
  <Shell>
    <GlobalStyle />
    <Gradients />
    <TitleBar>
      <Logo size={16} />
      <AppTitle>ALERE 15.0</AppTitle>
      <TitleButton aria-label="Minimize">
        <Svg $size={10} viewBox="0 0 10 10" stroke="#000"><path d="M0 5.500H10" /></Svg>
      </TitleButton>
      <TitleButton aria-label="Restore">
        <Svg $size={10} viewBox="0 0 10 10" fill="none" stroke="#000"><path d="M.5 2.500H7.500V9.500H.5zM2.500 2.500V.5H9.500V7.500H7.500" /></Svg>
      </TitleButton>
      <TitleButton aria-label="Close">
        <Svg $size={10} viewBox="0 0 10 10" stroke="#000"><path d="M0 0 10 10M10 0 0 10" /></Svg>
      </TitleButton>
    </TitleBar>
    <TabBar>
      {tabs.map(([name, width]) => (
        <Tab key={name} $width={width} $active={name === "Inventory"}>{name}</Tab>
      ))}
      <Fetch>
        <FetchInput placeholder="Enter Fetch text" aria-label="Fetch" />
        <FetchButton aria-label="Fetch history"><Arrow /></FetchButton>
      </Fetch>
      <CollapseButton aria-label="Collapse ribbon"><Arrow $dir="up" /></CollapseButton>
    </TabBar>
    <Ribbon>
      {ribbon.map(({title, width, pad, gap, items}) => (
        <RibbonGroup key={title} $width={width} $last={title === "Configuration"}>
          <RibbonItems $pad={pad} $gap={gap}>
            {items.map(([icon, label, menu]) => (
              <RibbonButton key={label}>
                <Icon name={icon} />
                <RibbonText>{label}</RibbonText>
                {menu && <DownArrow />}
              </RibbonButton>
            ))}
          </RibbonItems>
          <RibbonCaption>{title}</RibbonCaption>
        </RibbonGroup>
      ))}
    </Ribbon>
    <Desktop>
      <MassPicking />
      <InventoryShipping />
    </Desktop>
    <StatusBar>
      <StatusText>ALERE Inc.</StatusText>
      <StatusCell $width={28} />
      <StatusCell $width={30}>NUM</StatusCell>
      <StatusCell $width={33} />
      <StatusCell $width={47}>16:23:43</StatusCell>
    </StatusBar>
  </Shell>
);

export default App;
